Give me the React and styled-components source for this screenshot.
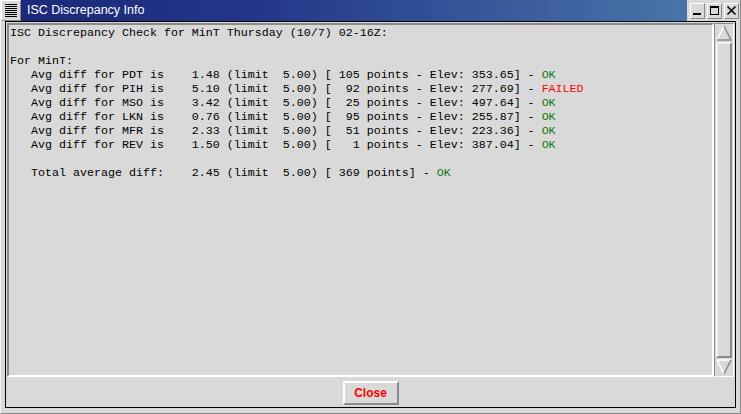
import React from "react"
import styled, { createGlobalStyle } from "styled-components"

const GlobalStyle = createGlobalStyle`
    html, body { margin: 0; padding: 0; background: #d9d9d9; }
    body { font-family: "Liberation Sans", Arial, sans-serif; }
`

const stations = [
    { id: "PDT", avg: "1.48", points: 105, elev: "353.65", ok: true },
    { id: "PIH", avg: "5.10", points: 92, elev: "277.69", ok: false },
    { id: "MSO", avg: "3.42", points: 25, elev: "497.64", ok: true },
    { id: "LKN", avg: "0.76", points: 95, elev: "255.87", ok: true },
    { id: "MFR", avg: "2.33", points: 51, elev: "223.36", ok: true },
    { id: "REV", avg: "1.50", points: 1, elev: "387.04", ok: true },
]

const pad = (v, n) => String(v).padStart(n, " ")

export default function App() {
    return (
        <Window>
            <GlobalStyle />
            <TitleBar>
                <MenuButton>
                    <svg width="12" height="13" viewBox="0 0 12 13">
                        { [0, 2, 4, 6, 8, 10, 12].map(y => (
                            <rect key={ y } x="0" y={ y } width="12" height="1" fill="#000" />
                        )) }
                    </svg>
                </MenuButton>
                <Title>ISC Discrepancy Info</Title>
                <WinButtons>
                    <WinButton>
                        <svg width="11" height="11" viewBox="0 0 11 11">
                            <rect x="1" y="8" width="8" height="2" fill="#000" />
                        </svg>
                    </WinButton>
                    <WinButton>
                        <svg width="11" height="11" viewBox="0 0 11 11">
                            <rect x="1.5" y="1.5" width="8" height="8" fill="none" stroke="#000" />
                            <rect x="1" y="1" width="9" height="2" fill="#000" />
                        </svg>
                    </WinButton>
                    <WinButton>
                        <svg width="11" height="11" viewBox="0 0 11 11">
                            <path d="M1.5 1.5 L9.5 9.5 M9.5 1.5 L1.5 9.5" stroke="#000" strokeWidth="1.6" />
                        </svg>
                    </WinButton>
                </WinButtons>
            </TitleBar>
            <Frame>
                <Body>
                    <ContentRow>
                        <TextArea>
                            <Line>ISC Discrepancy Check for MinT Thursday (10/7) 02-16Z:</Line>
                            <Line>{ " " }</Line>
                            <Line>For MinT:</Line>
                            { stations.map(s => (
                                <Line key={ s.id }>
                                    { `   Avg diff for ${ s.id } is    ${ s.avg } (limit  5.00) [${ pad(s.points, 4) } points - Elev: ${ s.elev }] - ` }
                                    <Status $ok={ s.ok }>{ s.ok ? "OK" : "FAILED" }</Status>
                                </Line>
                            )) }
                            <Line>{ " " }</Line>
                            <Line>
                                { "   Total average diff:    2.45 (limit  5.00) [ 369 points] - " }
                                <Status $ok>OK</Status>
                            </Line>
                        </TextArea>
                        <Scrollbar>
                            <Arrow>
                                <svg width="16" height="16" viewBox="0 0 16 16">
                                    <polygon points="8,1 15,15 1,15" fill="#d9d9d9" />
                                    <path d="M1 15 L8 1" stroke="#fff" strokeWidth="1.5" />
                                    <path d="M8 1 L15 15 L1 15" fill="none" stroke="#8a8a8a" strokeWidth="1.5" />
                                </svg>
                            </Arrow>
                            <Thumb />
                            <Arrow>
                                <svg width="16" height="16" viewBox="0 0 16 16">
                                    <polygon points="1,1 15,1 8,15" fill="#d9d9d9" />
                                    <path d="M1 1 L15 1 M1 1 L8 15" fill="none" stroke="#fff" strokeWidth="1.5" />
                                    <path d="M15 1 L8 15" stroke="#8a8a8a" strokeWidth="1.5" />
                                </svg>
                            </Arrow>
                        </Scrollbar>
                    </ContentRow>
                    <ButtonRow>
                        <CloseButton>Close</CloseButton>
                    </ButtonRow>
                </Body>
            </Frame>
        </Window>
    )
}

const Window = styled.div`
    width: 741px;
    height: 414px;
    display: flex;
    flex-direction: column;
    background: #d9d9d9;
    box-sizing: border-box;
    border-left: 1px solid #f2f2f2;
    border-right: 1px solid #8a8a8a;
    border-bottom: 1px solid #8a8a8a;
    overflow: hidden;
`

const TitleBar = styled.div`
    height: 21px;
    flex: none;
    display: flex;
    align-items: center;
    background: linear-gradient(to right, #1a2878 0%, #23378a 35%, #3d629f 75%, #4e7bad 100%);
`

const MenuButton = styled.div`
    width: 20px;
    height: 21px;
    box-sizing: border-box;
    background: #d9d9d9;
    border: 1px solid;
    border-color: #fff #8a8a8a #8a8a8a #fff;
    display: flex;
    align-items: center;
    justify-content: center;
`

const Title = styled.div`
    flex: 1;
    padding-left: 6px;
    color: #fff;
    font-family: "Liberation Sans", Arial, sans-serif;
    font-size: 12.5px;
    line-height: 21px;
    white-space: nowrap;
`

const WinButtons = styled.div`
    display: flex;
    gap: 2px;
    padding: 0 1px 0 3px;
    align-self: stretch;
    align-items: center;
    background: #d9d9d9;
`

const WinButton = styled.div`
    width: 15px;
    height: 16px;
    box-sizing: border-box;
    background: #d9d9d9;
    border: 1px solid;
    border-color: #fff #8a8a8a #8a8a8a #fff;
    display: flex;
    align-items: center;
    justify-content: center;
`

const Frame = styled.div`
    flex: 1;
    display: flex;
    padding: 0 4px 5px 4px;
    min-height: 0;
`

const Body = styled.div`
    flex: 1;
    display: flex;
    flex-direction: column;
    border: 1px solid #000;
    padding: 1px 1px 0 1px;
    min-height: 0;
`

const ContentRow = styled.div`
    flex: 1;
    display: flex;
    min-height: 0;
`

const TextArea = styled.div`
    flex: 1;
    box-sizing: border-box;
    border: 2px solid;
    border-color: #8a8a8a #fff #fff #8a8a8a;
    padding: 1px 1px;
    overflow: hidden;
`

const Line = styled.div`
    font-family: "Liberation Mono", "Courier New", monospace;
    font-size: 11.67px;
    line-height: 14px;
    height: 14px;
    white-space: pre;
    color: #000;
`

const Status = styled.span`
    color: ${ p => p.$ok ? "#0a7a0a" : "#ff0000" };
`

const Scrollbar = styled.div`
    width: 20px;
    flex: none;
    box-sizing: border-box;
    border: 1px solid;
    border-color: #8a8a8a #fff #fff #8a8a8a;
    display: flex;
    flex-direction: column;
    align-items: center;
    padding: 1px 0;
`

const Arrow = styled.div`
    width: 16px;
    height: 16px;
    flex: none;
    display: flex;
`

const Thumb = styled.div`
    flex: 1;
    width: 16px;
    box-sizing: border-box;
    border: 2px solid;
    border-color: #f2f2f2 #8a8a8a #8a8a8a #f2f2f2;
    margin: 1px 0;
`

const ButtonRow = styled.div`
    height: 30px;
    flex: none;
    display: flex;
    justify-content: center;
    align-items: flex-start;
    padding-top: 4px;
    box-sizing: border-box;
`

const CloseButton = styled.button`
    width: 56px;
    height: 24px;
    box-sizing: border-box;
    background: #d9d9d9;
    border: 2px solid;
    border-color: #fff #8a8a8a #8a8a8a #fff;
    color: #ff0000;
    font-family: "Liberation Sans", Arial, sans-serif;
    font-weight: bold;
    font-size: 12px;
    padding: 0;
`
